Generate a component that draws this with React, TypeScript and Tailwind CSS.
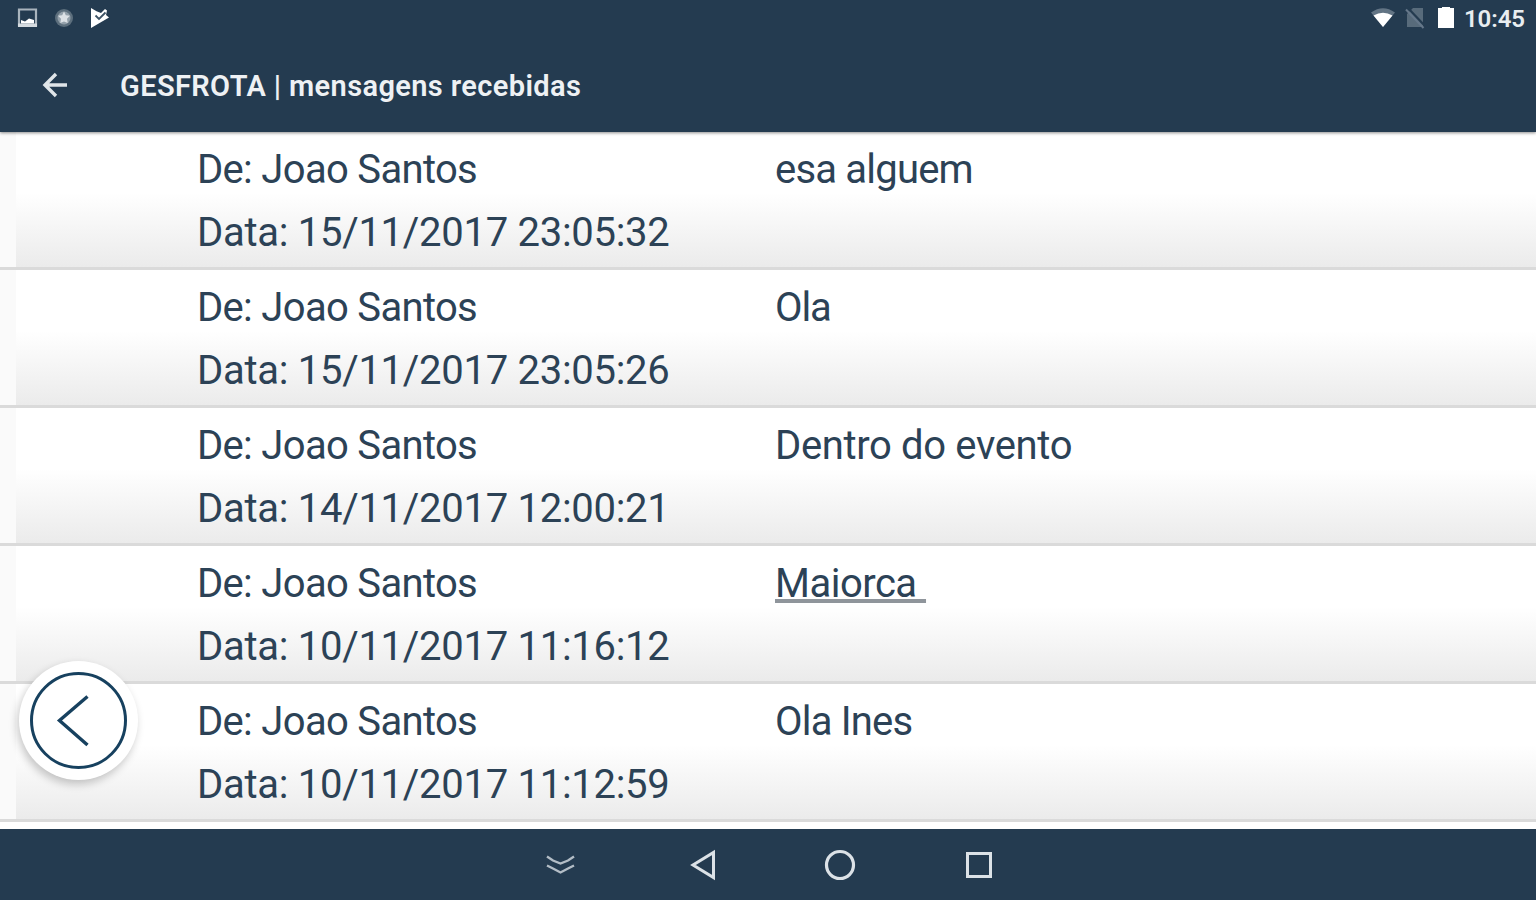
const messages = [
  { from: 'Joao Santos', date: '15/11/2017 23:05:32', text: 'esa alguem', style: 'tracking-[-0.8px]' },
  { from: 'Joao Santos', date: '15/11/2017 23:05:26', text: 'Ola', style: 'tracking-[-1.1px]' },
  { from: 'Joao Santos', date: '14/11/2017 12:00:21', text: 'Dentro do evento', style: 'tracking-[-0.35px]' },
  {
    from: 'Joao Santos',
    date: '10/11/2017 11:16:12',
    text: 'Maiorca ',
    style: 'tracking-[-0.5px] underline decoration-[#8f959b] decoration-[4px] underline-offset-[2px]',
  },
  { from: 'Joao Santos', date: '10/11/2017 11:12:59', text: 'Ola Ines', style: 'tracking-[-0.8px]' },
];

function StatusBar() {
  return (
    <div className="flex h-9 items-center justify-between pl-[17px] pr-[11px]">
      <div className="flex items-center">
        <svg width="21" height="20" viewBox="0 0 21 20" fill="none">
          <path d="M2 1.500h17v16H2z" stroke="#a9b4bd" strokeWidth="2.200" />
          <path d="M1 15.500h19V19H1z" fill="#d5dbe0" />
          <path d="M4 15.500V12l4 1.500 4-3 5 1.500v3.500z" fill="#fff" />
        </svg>
        <svg className="ml-[16px]" width="20" height="20" viewBox="0 0 20 20">
          <circle cx="10" cy="10" r="9" fill="#5d6f7d" />
          <circle cx="10" cy="10" r="6.500" fill="#93a0aa" />
          <path d="M10 3.500l1.800 3.700 4.200.5-3 3 .7 4.300-3.700-1.500L6.300 15l.7-4.300-3-3 4.200-.5z" fill="#dce1e5" />
        </svg>
        <svg className="ml-[16px]" width="20" height="20" viewBox="0 0 20 20">
          <path d="M1 0l5.500 3.200L11 5l4-4 2 1.500-1 4.500 3 2.500L1 20z" fill="#fff" />
          <path d="M5.500 7.500l3.500 3.500L15.500 4.500" stroke="#3c5264" strokeWidth="1.800" fill="none" />
        </svg>
      </div>
      <div className="flex items-center">
        <svg width="26" height="20" viewBox="0 0 26 20">
          <path d="M1 4.500Q13-4 25 4.500L13 19z" fill="#627484" />
          <path d="M3.500 7.500Q13 2 22.500 7.500L13 19z" fill="#fff" />
        </svg>
        <svg className="ml-[9px]" width="20" height="22" viewBox="0 0 20 22">
          <path d="M8 1h10v19H2V7z" fill="#586b7b" />
          <path d="M3 1l16 17" stroke="#243b50" strokeWidth="2.200" />
          <path d="M1 2.500l17.500 18.500" stroke="#65778a" strokeWidth="2" />
        </svg>
        <svg className="ml-[12px]" width="18" height="22" viewBox="0 0 18 22">
          <path d="M1 1h4V0h8v1h4v20H1z" fill="#fff" />
        </svg>
        <span className="ml-[9px] w-[61px] whitespace-nowrap pt-0.5 text-[24px] font-semibold leading-9 tracking-[-0.1px] text-[#e8edf0]">10:45</span>
      </div>
    </div>
  );
}

function Header() {
  return (
    <header className="relative z-10 h-[132px] shrink-0 bg-[#243b50] shadow-[0_1px_3px_rgba(0,0,0,0.45)]">
      <StatusBar />
      <div className="flex h-24 items-center pt-px pl-[42px]">
        <svg width="26" height="26" viewBox="0 0 26 26" fill="none" stroke="#e0e5e9" strokeWidth="3.400">
          <path d="M25 13H3M14 2L3 13l11 11" />
        </svg>
        <h1 className="ml-[52px] whitespace-nowrap pt-[3px] text-[29px] font-semibold leading-10 tracking-[0.38px] text-[#eef1f4]">
          GESFROTA | mensagens recebidas
        </h1>
      </div>
    </header>
  );
}

function NavBar() {
  return (
    <nav className="flex h-[71px] shrink-0 items-center bg-[#243b50] pl-[546px]">
      <svg width="29" height="22" viewBox="0 0 29 22" fill="none" stroke="#b3bdc6" strokeWidth="2.400">
        <path d="M1 2.500l6 4 7.500 3 7.500-3 6-4M1 11.500l6 3 7.500 4 7.500-4 6-3" />
      </svg>
      <svg className="ml-[114px]" width="28" height="32" viewBox="0 0 28 32" fill="none" stroke="#dce2e7" strokeWidth="3">
        <path d="M24.500 3.500v25L4 16z" />
      </svg>
      <svg className="ml-[107px]" width="32" height="32" viewBox="0 0 32 32" fill="none" stroke="#dce2e7" strokeWidth="3.200">
        <circle cx="16" cy="16" r="13.500" />
      </svg>
      <svg className="ml-[109px]" width="28" height="28" viewBox="0 0 28 28" fill="none" stroke="#dce2e7" strokeWidth="3">
        <path d="M2.500 2.500h23v23h-23z" />
      </svg>
    </nav>
  );
}

export default function App() {
  return (
    <div className="relative flex h-[900px] w-[1536px] flex-col overflow-hidden bg-white font-['Roboto',sans-serif]">
      <Header />
      <main className="flex-1">
        {messages.map((m) => (
          <div key={m.date} className="flex h-[138px] border-b-[3px] border-[#dadada] bg-[#fafafa] pl-4">
            <div className="flex flex-1 bg-linear-to-b from-white from-45% to-[#ebebeb] pl-[181px] text-[40px] leading-[63px] text-[#2c4256]">
              <div className="w-[578px] whitespace-nowrap pt-1.5">
                <p className="tracking-[-0.68px]">De: {m.from}</p>
                <p className="tracking-[-0.28px]">Data: {m.date}</p>
              </div>
              <p className="whitespace-pre pt-1.5">
                <span className={m.style}>{m.text}</span>
              </p>
            </div>
          </div>
        ))}
      </main>
      <NavBar />
      <button
        className="absolute left-[19px] top-[661px] flex size-[119px] items-center justify-center rounded-full bg-white shadow-[-2px_4px_8px_rgba(0,0,0,0.22)]"
        aria-label="Voltar"
      >
        <svg width="98" height="98" viewBox="0 0 98 98" fill="none" stroke="#17415f">
          <circle cx="48.500" cy="48.500" r="47" strokeWidth="3" />
          <path d="M57.500 24.500L29.500 48.500l28 24.500" strokeWidth="3.400" />
        </svg>
      </button>
    </div>
  );
}
